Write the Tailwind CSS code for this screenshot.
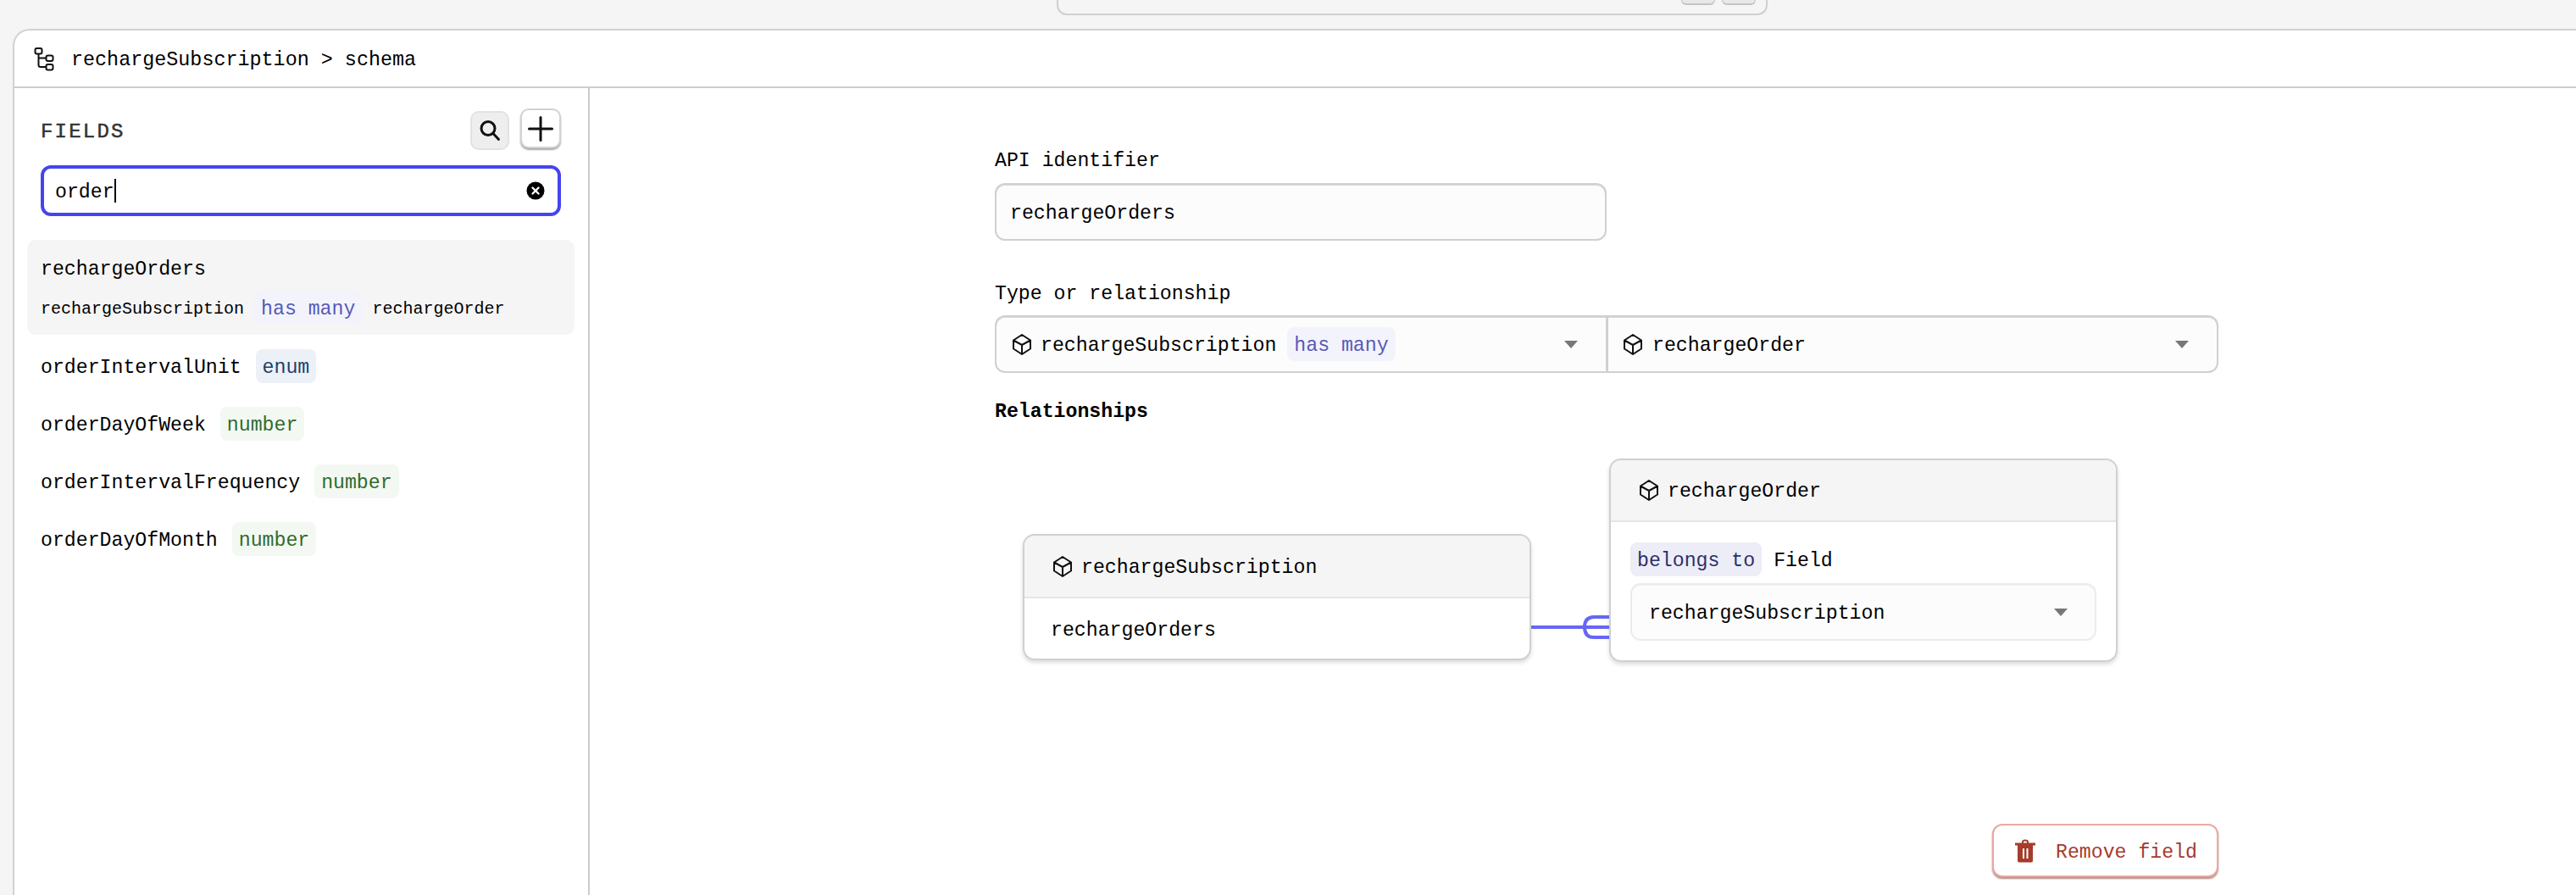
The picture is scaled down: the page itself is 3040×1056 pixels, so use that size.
<!DOCTYPE html>
<html>
<head>
<meta charset="utf-8">
<script src="https://cdn.jsdelivr.net/npm/@tailwindcss/browser@4"></script>
</head>
<body class="m-0 h-[1056px] w-[3040px] overflow-hidden bg-[#f5f5f5] font-['Liberation_Mono',monospace] text-[23.2px] leading-[32px] text-black">
  <div class="h-[34px] pl-[1247px]">
    <div class="flex h-[18px] w-[839px] justify-end gap-[8px] rounded-b-[12px] border-x-2 border-b-2 border-[#cfcfcf] pr-[12px]">
      <div class="h-[6px] w-[40px] rounded-b-[6px] border-x border-b-2 border-[#c4c4c4] bg-[#e8e8e8]"></div>
      <div class="h-[6px] w-[40px] rounded-b-[6px] border-x border-b-2 border-[#c4c4c4] bg-[#e8e8e8]"></div>
    </div>
  </div>

  <div class="ml-[15px] flex h-[1022px] flex-col rounded-tl-[20px] border-t-2 border-l-2 border-[#d2d2d2] bg-white">
    <div class="flex h-[68px] shrink-0 items-center gap-[20px] border-b-2 border-[#cccccc] pl-[23px]">
      <svg class="mt-[1px] h-[28px] w-[24px]" viewBox="0 0 24 28" fill="none" stroke="#111" stroke-width="2" stroke-linejoin="round">
        <rect x="1.5" y="1" width="8" height="6.5" rx="2"/>
        <rect x="14.5" y="9.500" width="8" height="6.5" rx="2"/>
        <rect x="14.5" y="20" width="8" height="6.5" rx="2"/>
        <path d="M5.5 7.5V20.5Q5.5 23 8 23H14.5M5.5 12.5H14.5"/>
      </svg>
      <span class="pt-[4px] text-[23.4px]">rechargeSubscription &gt; schema</span>
    </div>

    <div class="flex min-h-0 flex-1">
      <aside class="w-[679px] shrink-0 border-r-2 border-[#cccccc]">
        <div class="mt-[24px] flex h-[49px] items-start justify-between pr-[32px] pl-[31px]">
          <span class="mt-[12px] text-[24px] leading-[32px] tracking-[2.2px] text-[#333333] [-webkit-text-stroke:0.5px_#333333]">FIELDS</span>
          <div class="flex items-start gap-[13px]">
            <button class="mt-[3px] flex h-[46px] w-[46px] items-center justify-center rounded-[10px] border-2 border-[#e2e2e2] bg-[#eeeeee]">
              <svg class="h-[26px] w-[26px]" viewBox="0 0 26 26" fill="none" stroke="#111" stroke-width="3" stroke-linecap="round"><circle cx="11" cy="10.5" r="8"/><path d="M17 16.5L23.5 23.5"/></svg>
            </button>
            <button class="flex h-[47px] w-[48px] items-center justify-center rounded-[10px] border-2 border-[#d2d2d2] bg-white shadow-[0_2px_2px_rgba(0,0,0,0.35)]">
              <svg class="h-[30px] w-[30px]" viewBox="0 0 30 30" fill="none" stroke="#111" stroke-width="3" stroke-linecap="round"><path d="M15 1.5V28.5M1.5 15H28.5"/></svg>
            </button>
          </div>
        </div>

        <div class="mt-[18px] mr-[32px] ml-[31px] flex h-[60px] items-center justify-between rounded-[12px] border-4 border-[#4545ee] bg-white pr-[15px] pl-[13px]">
          <div class="flex items-center"><span class="pt-[4px]">order</span><span class="h-[28px] w-[2px] bg-black"></span></div>
          <svg class="h-[22px] w-[22px]" viewBox="0 0 22 22"><circle cx="11" cy="11" r="10.5" fill="#000"/><path d="M7.5 7.5L14.5 14.5M14.5 7.5L7.5 14.5" stroke="#fff" stroke-width="2.4" stroke-linecap="round"/></svg>
        </div>

        <div class="mt-[28px] mr-[16px] ml-[15px] flex h-[112px] flex-col rounded-[10px] bg-[#f5f5f5] pt-[19px] pl-[16px]">
          <div>rechargeOrders</div>
          <div class="mt-[9px] flex h-[40px] items-center gap-[12px] text-[20px]">
            <span class="pt-[4px]">rechargeSubscription</span>
            <span class="flex h-[40px] items-center rounded-[8px] bg-[#f3f3fc] px-[8px] pt-[4px] text-[23.2px] text-[#5659b8]">has many</span>
            <span class="pt-[4px]">rechargeOrder</span>
          </div>
        </div>

        <div class="mt-[3px] flex h-[68px] items-center gap-[17px] pl-[31px]">
          <span class="pt-[4px]">orderIntervalUnit</span>
          <span class="flex h-[40px] items-center rounded-[8px] bg-[#ecf0f7] px-[8px] pt-[4px] text-[#1d3f6b]">enum</span>
        </div>
        <div class="flex h-[68px] items-center gap-[17px] pl-[31px]">
          <span class="pt-[4px]">orderDayOfWeek</span>
          <span class="flex h-[40px] items-center rounded-[8px] bg-[#f3f8f2] px-[8px] pt-[4px] text-[#2f6b2f]">number</span>
        </div>
        <div class="flex h-[68px] items-center gap-[17px] pl-[31px]">
          <span class="pt-[4px]">orderIntervalFrequency</span>
          <span class="flex h-[40px] items-center rounded-[8px] bg-[#f3f8f2] px-[8px] pt-[4px] text-[#2f6b2f]">number</span>
        </div>
        <div class="flex h-[68px] items-center gap-[17px] pl-[31px]">
          <span class="pt-[4px]">orderDayOfMonth</span>
          <span class="flex h-[40px] items-center rounded-[8px] bg-[#f3f8f2] px-[8px] pt-[4px] text-[#2f6b2f]">number</span>
        </div>
      </aside>

      <main class="ml-[478px] w-[1444px] shrink-0">
        <div class="mt-[70px]">API identifier</div>
        <div class="mt-[10px] flex h-[68px] w-[722px] items-center rounded-[12px] border-2 border-[#d0d0d0] bg-[#fcfcfc] pl-[16px] shadow-[inset_0_1px_0_#d8d8d8]"><span class="pt-[4px]">rechargeOrders</span></div>

        <div class="mt-[47px]">Type or relationship</div>
        <div class="mt-[9px] flex h-[68px] rounded-[12px] border-2 border-[#d0d0d0] bg-[#fcfcfc] shadow-[inset_0_1px_0_#d8d8d8]">
          <div class="flex w-[722px] items-center justify-between border-r-3 border-[#d0d0d0] pr-[33px] pl-[18px]">
            <div class="flex items-center">
              <svg class="h-[25px] w-[24px]" viewBox="0 0 24 25" fill="none" stroke="#111" stroke-width="2" stroke-linejoin="round"><path d="M12 1L22 7.500V17.500L12 24L2 17.500V7.500ZM2 7.500L12 13L22 7.500M12 13V24"/></svg>
              <span class="ml-[10px] pt-[4px]">rechargeSubscription</span>
              <span class="ml-[13px] flex h-[40px] items-center rounded-[8px] bg-[#f3f3fc] px-[8px] pt-[4px] text-[#5659b8]">has many</span>
            </div>
            <svg class="h-[9px] w-[16px]" viewBox="0 0 16 9"><path d="M0 0H16L8 9Z" fill="#777"/></svg>
          </div>
          <div class="flex flex-1 items-center justify-between pr-[33px] pl-[17px]">
            <div class="flex items-center">
              <svg class="h-[25px] w-[24px]" viewBox="0 0 24 25" fill="none" stroke="#111" stroke-width="2" stroke-linejoin="round"><path d="M12 1L22 7.500V17.500L12 24L2 17.500V7.500ZM2 7.500L12 13L22 7.500M12 13V24"/></svg>
              <span class="ml-[11px] pt-[4px]">rechargeOrder</span>
            </div>
            <svg class="h-[9px] w-[16px]" viewBox="0 0 16 9"><path d="M0 0H16L8 9Z" fill="#777"/></svg>
          </div>
        </div>

        <div class="mt-[30px] font-bold">Relationships</div>

        <div class="relative mt-[39px] flex h-[240px] items-start pl-[33px]">
          <div class="mt-[89px] w-[600px] overflow-hidden rounded-[14px] border-2 border-[#d0d0d0] bg-white shadow-[0_3px_5px_rgba(0,0,0,0.14)]">
            <div class="flex h-[74px] items-center border-b-2 border-[#e5e5e5] bg-[#f5f5f5] pl-[33px]">
              <svg class="h-[25px] w-[24px]" viewBox="0 0 24 25" fill="none" stroke="#111" stroke-width="2" stroke-linejoin="round"><path d="M12 1L22 7.500V17.500L12 24L2 17.500V7.500ZM2 7.500L12 13L22 7.500M12 13V24"/></svg>
              <span class="ml-[10px] pt-[4px]">rechargeSubscription</span>
            </div>
            <div class="flex h-[71px] items-center pl-[31px]"><span class="pt-[4px]">rechargeOrders</span></div>
          </div>

          <svg class="h-[60px] w-[92px] shrink-0 translate-y-[168px]" viewBox="0 0 92 60" fill="none" stroke="#6666f5" stroke-width="4">
            <path d="M0 31H92M92 19H74Q63 19 63 31Q63 43 74 43H92"/>
          </svg>

          <div class="w-[600px] overflow-hidden rounded-[14px] border-2 border-[#d0d0d0] bg-white shadow-[0_3px_5px_rgba(0,0,0,0.14)]">
            <div class="flex h-[73px] items-center border-b-2 border-[#e5e5e5] bg-[#f5f5f5] pl-[33px]">
              <svg class="h-[25px] w-[24px]" viewBox="0 0 24 25" fill="none" stroke="#111" stroke-width="2" stroke-linejoin="round"><path d="M12 1L22 7.500V17.500L12 24L2 17.500V7.500ZM2 7.500L12 13L22 7.500M12 13V24"/></svg>
              <span class="ml-[10px] pt-[3px]">rechargeOrder</span>
            </div>
            <div class="px-[23px] pt-[24px] pb-[23px]">
              <div class="flex items-center gap-[14px]">
                <span class="flex h-[40px] items-center rounded-[8px] bg-[#ecedf7] px-[8px] pt-[4px] text-[#2d2f6b]">belongs to</span>
                <span class="pt-[4px]">Field</span>
              </div>
              <div class="mt-[8px] flex h-[68px] items-center justify-between rounded-[12px] border-2 border-[#ececec] bg-[#fcfcfc] pr-[32px] pl-[20px] shadow-[inset_0_1px_0_#f0f0f0]">
                <span class="pt-[4px]">rechargeSubscription</span>
                <svg class="h-[9px] w-[16px]" viewBox="0 0 16 9"><path d="M0 0H16L8 9Z" fill="#777"/></svg>
              </div>
            </div>
          </div>
        </div>

        <div class="mt-[191px] flex justify-end">
          <button class="flex h-[63px] w-[267px] items-center rounded-[12px] border-2 border-[#e8a9a2] bg-white pl-[25px] text-[#a53c2c] shadow-[0_2px_2px_rgba(120,40,30,0.55)]">
            <svg class="h-[28px] w-[24px]" viewBox="0 0 24 28">
              <path fill="#a53c2c" fill-rule="evenodd" d="M8 4.500V3.500Q8 0.500 12 0.500Q16 0.500 16 3.500V4.500H24V7.500H21V25.500Q21 27.500 19 27.500H5Q3 27.500 3 25.500V7.500H0V4.500ZM10 4.500H14V3.500Q14 2.500 12 2.500Q10 2.500 10 3.500ZM9 11V23H11V11ZM13.500 11V23H15.500V11Z"/>
            </svg>
            <span class="ml-[24px] pt-[4px]">Remove field</span>
          </button>
        </div>
      </main>
    </div>
  </div>
</body>
</html>
